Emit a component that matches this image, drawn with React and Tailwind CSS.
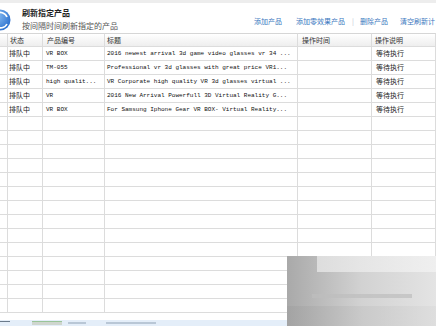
import React from "react";

const cjk = { fontFamily: '"Noto Sans CJK SC", "Noto Sans", sans-serif' };
const mono = { fontFamily: '"Liberation Mono", "Noto Sans CJK SC", monospace' };

const rows = [
  ["排队中", "VR BOX", "2016 newest arrival 3d game video glasses vr 34 ...", "", "等待执行"],
  ["排队中", "TM-055", "Professional vr 3d glasses with great price VR1...", "", "等待执行"],
  ["排队中", "high qualit...", "VR Corporate high quality VR 3d glasses virtual ...", "", "等待执行"],
  ["排队中", "VR", "2016 New Arrival Powerfull 3D Virtual Reality G...", "", "等待执行"],
  ["排队中", "VR BOX", "For Samsung Iphone Gear VR BOX- Virtual Reality...", "", "等待执行"],
];

const EMPTY = 14;

function Cell({ children, className = "", style }) {
  return (
    <div
      className={"h-[14px] border-r border-b border-[#dcdcdc] overflow-hidden whitespace-nowrap leading-[13px] " + className}
      style={style}
    >
      {children}
    </div>
  );
}

export default function App() {
  const empties = Array.from({ length: EMPTY });
  return (
    <div className="relative w-[436px] h-[326px] overflow-hidden bg-white flex flex-col" style={cjk}>
      <div className="h-[3px] bg-[#ededed] shrink-0" />
      <div className="h-[30px] shrink-0 flex bg-white">
        <div className="w-[254px] flex shrink-0">
          <svg width="12" height="24" viewBox="0 0 12 24" className="mt-[5px] shrink-0">
            <defs>
              <radialGradient id="g" cx="0.3" cy="0.3" r="0.9">
                <stop offset="0" stopColor="#8fc3f5" />
                <stop offset="1" stopColor="#1e64c8" />
              </radialGradient>
            </defs>
            <circle cx="0" cy="12" r="10.5" fill="url(#g)" />
            <path d="M-4 6 A7 7 0 0 1 7 9" stroke="#fff" strokeWidth="1.6" fill="none" />
            <path d="M7 16 A7 7 0 0 1 -4 18" stroke="#fff" strokeWidth="1.6" fill="none" />
          </svg>
          <div className="ml-[10px] flex flex-col">
            <div className="mt-[5px] text-[8px] leading-[10px] font-bold text-[#222]">刷新指定产品</div>
            <div className="mt-[3px] text-[8px] leading-[10px] text-[#555]">按间隔时间刷新指定的产品</div>
          </div>
        </div>
        <div className="flex items-start pt-[14px] text-[7px] leading-[9px] text-[#3a78c0] whitespace-nowrap">
          <span>添加产品</span>
          <span className="ml-[14px]">添加零效果产品</span>
          <span className="ml-[7px] text-[#b8c4d0]">|</span>
          <span className="ml-[6px]">删除产品</span>
          <span className="ml-[12px]">清空刷新计</span>
        </div>
      </div>

      <div className="flex-1 overflow-hidden">
        <div className="grid grid-cols-[8px_35px_62px_193px_74px_1fr] text-[7px]">
          <Cell className="bg-gradient-to-b from-white to-[#eeeeee] border-t border-t-[#d6d6d6]" />
          <Cell className="bg-gradient-to-b from-white to-[#eeeeee] border-t border-t-[#d6d6d6] pl-[2px] text-[#333]">状态</Cell>
          <Cell className="bg-gradient-to-b from-white to-[#eeeeee] border-t border-t-[#d6d6d6] pl-[4px] text-[#333]">产品编号</Cell>
          <Cell className="bg-gradient-to-b from-white to-[#eeeeee] border-t border-t-[#d6d6d6] pl-[2px] text-[#333]">标题</Cell>
          <Cell className="bg-gradient-to-b from-white to-[#eeeeee] border-t border-t-[#d6d6d6] pl-[4px] text-[#333]">操作时间</Cell>
          <Cell className="bg-gradient-to-b from-white to-[#eeeeee] border-t border-t-[#d6d6d6] pl-[3px] text-[#333]">操作说明</Cell>

          {rows.map((r, i) => (
            <React.Fragment key={i}>
              <Cell />
              <Cell className="pl-[1px] text-[#222] text-[7px]">{r[0]}</Cell>
              <Cell className="pl-[3px] text-[#111] text-[6px]" style={mono}>{r[1]}</Cell>
              <Cell className="pl-[2px] text-[#111] text-[6px]" style={mono}>{r[2]}</Cell>
              <Cell />
              <Cell className="pl-[4px] text-[#222] text-[7px]">{r[4]}</Cell>
            </React.Fragment>
          ))}
          {empties.map((_, i) => (
            <React.Fragment key={"e" + i}>
              <Cell />
              <Cell />
              <Cell />
              <Cell />
              <Cell />
              <Cell />
            </React.Fragment>
          ))}
        </div>
      </div>

      <div className="h-[6px] shrink-0 bg-[#e4eef9] flex items-start">
        <div className="w-[10px] h-[1px] bg-[#6b7b8c] mt-[1px]" />
        <div className="ml-[22px] w-[30px] h-[4px] mt-[1px] bg-[#cfd6cf] border-t border-[#9ac59a]" />
        <div className="ml-[6px] w-[18px] h-[2px] mt-[2px] bg-[#b9c7d6]" />
        <div className="ml-[20px] w-[50px] h-[2px] mt-[2px] bg-[#b9c7d6]" />
      </div>

      <div className="absolute left-[287px] top-[256px] w-[149px] h-[70px] bg-gradient-to-r from-[#a9a9a9] via-[#d2d2d2] to-[#e4e4e4]">
        <div className="absolute left-[30px] top-0 w-[119px] h-[16px] bg-gradient-to-r from-[#e6e6e6] to-[#f2f2f2] opacity-80" />
        <div className="absolute left-[25px] top-[38px] w-[100px] h-[4px] bg-[#bdbdbd] opacity-70" />
        <div className="absolute left-0 top-[50px] w-[149px] h-[20px] bg-gradient-to-r from-[#a0a0a0] via-[#c6c6c6] to-[#dcdcdc] opacity-70" />
      </div>
    </div>
  );
}
